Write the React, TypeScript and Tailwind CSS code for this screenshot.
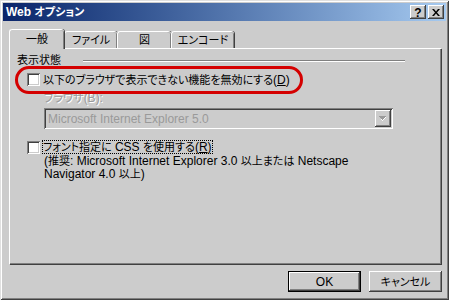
import React from 'react';

const font = 'font-["Liberation_Sans","Noto_Sans_CJK_JP",sans-serif]';

// Japanese runs are set a little smaller so kana widths come near MS UI Gothic
const J = ({ children }: { children: React.ReactNode }) => <span className="text-[11px]">{children}</span>;

// sunken white checkbox, classic style
const Check = () => (
  <span className="block w-[13px] h-[13px] shrink-0 bg-white shadow-[inset_1px_1px_#808080,inset_-1px_-1px_#ffffff,inset_2px_2px_#404040,inset_-2px_-2px_#cccccc]" />
);

const TitleButton = ({ children }: { children: React.ReactNode }) => (
  <div className="w-[16px] h-[14px] bg-[#cccccc] flex items-center justify-center shadow-[inset_-1px_-1px_#404040,inset_1px_1px_#ffffff,inset_-2px_-2px_#808080]">
    {children}
  </div>
);

const Tab = ({ label, active, width }: { label: string; active?: boolean; width: string }) => (
  <div
    className={`${width} ${
      active
        ? 'relative z-10 h-[20px] -mb-[1px]'
        : 'h-[17px]'
    } flex items-center justify-center bg-[#cccccc] border-l border-t border-white rounded-tl-[3px] rounded-tr-[3px] shadow-[inset_-1px_0_#808080,1px_0_#404040]`}
  >
    <span className="text-[11px] leading-none">{label}</span>
  </div>
);

const PushButton = ({ children, primary }: { children: React.ReactNode; primary?: boolean }) => (
  <div
    className={`w-[73px] h-[21px] flex items-center justify-center bg-[#cccccc] shadow-[inset_-1px_-1px_#404040,inset_1px_1px_#ffffff,inset_-2px_-2px_#808080] ${
      primary ? 'border border-black' : ''
    }`}
  >
    <span className="text-[12px] leading-none">{children}</span>
  </div>
);

export default function App() {
  return (
    <div
      className={`${font} w-[449px] h-[300px] bg-[#cccccc] text-black text-[12px] p-[3px] flex flex-col shadow-[inset_1px_1px_#e0e0e0,inset_-1px_-1px_#404040,inset_2px_2px_#ffffff,inset_-2px_-2px_#808080] [font-feature-settings:'palt']`}
    >
      {/* Title bar */}
      <div className="h-[18px] flex items-center bg-linear-to-r from-[#0a246a] to-[#a6caf0] pl-[3px] pr-[2px]">
        <span className="text-white font-bold text-[12px] leading-none">
          Web <J>オプション</J>
        </span>
        <div className="ml-auto flex gap-[2px]">
          <TitleButton>
            <span className="font-bold text-[12px] leading-none mt-[1px]">?</span>
          </TitleButton>
          <TitleButton>
            <svg width="8" height="7" viewBox="0 0 8 7">
              <path d="M0 0h2l2 2.5L6 0h2L5 3.5 8 7H6L4 4.5 2 7H0l3-3.5z" fill="#000" />
            </svg>
          </TitleButton>
        </div>
      </div>

      {/* Tabs */}
      <div className="mt-[7px] ml-[6px] h-[20px] flex items-end">
        <Tab label="一般" active width="w-[55px]" />
        <Tab label="ファイル" width="w-[53px]" />
        <Tab label="図" width="w-[54px]" />
        <Tab label="エンコード" width="w-[63px]" />
      </div>

      {/* Panel */}
      <div className="relative ml-[6px] w-[432px] h-[216px] border-l border-t border-white shadow-[inset_-1px_-1px_#808080,1px_1px_#404040] pl-[7px] pt-[5px]">
        <div className="flex items-center h-[13px]">
          <span className="w-[66px] text-[11px] leading-none">表示状態</span>
          <div className="w-[322px] h-[2px] border-t border-[#808080] border-b-white border-b" />
        </div>

        <div className="mt-[6px] ml-[10px] flex items-center gap-[3px] h-[13px]">
          <Check />
          <span className="leading-none">
            <J>以下のブラウザで表示できない機能を無効にする</J>(<span className="underline">D</span>)
          </span>
        </div>

        <div className="mt-[6px] ml-[27px] leading-none text-[#9a9a9a] [text-shadow:1px_1px_#ffffff]">
          <J>ブラウザ</J>(B):
        </div>

        <div className="mt-[4px] ml-[27px] w-[349px] h-[21px] flex items-center shadow-[inset_1px_1px_#808080,inset_-1px_-1px_#ffffff,inset_2px_2px_#404040,inset_-2px_-2px_#cccccc] pl-[4px] pr-[2px]">
          <span className="leading-none text-[#9a9a9a]">Microsoft Internet Explorer 5.0</span>
          <div className="ml-auto w-[16px] h-[17px] flex items-center justify-center shadow-[inset_-1px_-1px_#404040,inset_1px_1px_#ffffff,inset_-2px_-2px_#808080]">
            <svg width="8" height="5" viewBox="0 0 8 5">
              <path d="M2 1h5v1h-1v1h-1v1h-1v1h-1v-1h-1z" fill="#ffffff" />
              <path d="M0 0h7v1h-1v1h-1v1h-1v1h-1v-1h-1v-1h-1v-1h-1z" fill="#9a9a9a" />
            </svg>
          </div>
        </div>

        <div className="mt-[11px] ml-[10px] flex items-start gap-[2px]">
          <span className="mt-[1px]">
            <Check />
          </span>
          <div className="flex flex-col">
            <span className="leading-[14px] px-[1px] outline-1 outline-dotted outline-black -outline-offset-1 self-start">
              <J>フォント指定に</J> CSS <J>を使用する</J>(<span className="underline">R</span>)
            </span>
            <span className="leading-[14px] pl-[2px]">
              (<J>推奨</J>: Microsoft Internet Explorer 3.0 <J>以上または</J> Netscape
            </span>
            <span className="leading-[13px] pl-[2px]">
              Navigator 4.0 <J>以上</J>)
            </span>
          </div>
        </div>

        {/* red annotation ring */}
        <div className="absolute left-[5px] top-[17px] w-[288px] h-[28px] rounded-full border-[3px] border-[#d40000]" />
      </div>

      {/* Buttons */}
      <div className="mt-[7px] mr-[4px] flex justify-end gap-[8px]">
        <PushButton primary>OK</PushButton>
        <PushButton>
          <J>キャンセル</J>
        </PushButton>
      </div>
    </div>
  );
}
